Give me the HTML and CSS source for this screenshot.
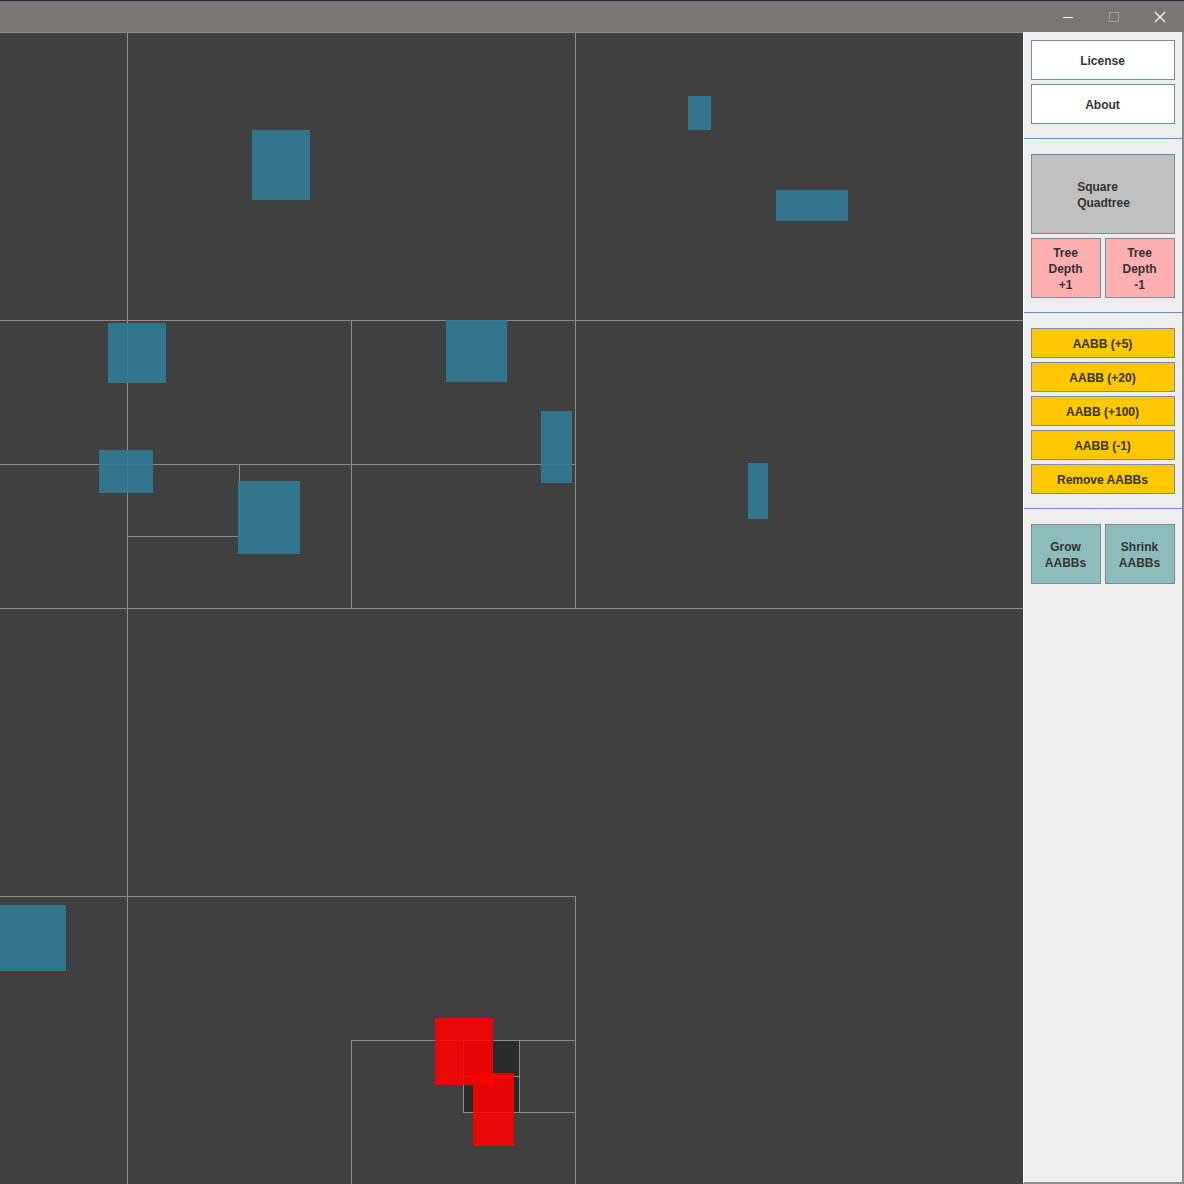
FILE: index.html
```html
<!DOCTYPE html>
<html>
<head>
<meta charset="utf-8">
<link rel="stylesheet" href="styles.css">
</head>
<body>
<div class="window">
  <div class="titlebar">
    <div class="tb-btn">
      <svg width="12" height="12" viewBox="0 0 12 12"><line x1="1" y1="6.5" x2="11" y2="6.5" stroke="#ffffff" stroke-width="1"/></svg>
    </div>
    <div class="tb-btn">
      <svg width="12" height="12" viewBox="0 0 12 12"><rect x="1.5" y="1.5" width="9" height="9" fill="none" stroke="#a39e9d" stroke-width="1"/></svg>
    </div>
    <div class="tb-btn">
      <svg width="12" height="12" viewBox="0 0 12 12"><path d="M1 1 L11 11 M11 1 L1 11" stroke="#ffffff" stroke-width="1.2"/></svg>
    </div>
  </div>
  <div class="main">
    <div class="canvas">
      <div class="cell-dark" style="left:463px;top:1008px;width:57px;height:73px"></div>

      <div class="ln" style="left:0;top:0;width:1023px;height:1px"></div>
      <div class="ln" style="left:127px;top:0;width:1px;height:1152px"></div>
      <div class="ln" style="left:575px;top:0;width:1px;height:577px"></div>
      <div class="ln" style="left:0;top:288px;width:1023px;height:1px"></div>
      <div class="ln" style="left:0;top:576px;width:1023px;height:1px"></div>
      <div class="ln" style="left:351px;top:288px;width:1px;height:288px"></div>
      <div class="ln" style="left:0;top:432px;width:576px;height:1px"></div>
      <div class="ln" style="left:239px;top:432px;width:1px;height:72px"></div>
      <div class="ln" style="left:127px;top:504px;width:113px;height:1px"></div>
      <div class="ln" style="left:0;top:864px;width:576px;height:1px"></div>
      <div class="ln" style="left:575px;top:864px;width:1px;height:288px"></div>
      <div class="ln" style="left:351px;top:1008px;width:225px;height:1px"></div>
      <div class="ln" style="left:351px;top:1008px;width:1px;height:144px"></div>
      <div class="ln" style="left:463px;top:1008px;width:1px;height:73px"></div>
      <div class="ln" style="left:519px;top:1008px;width:1px;height:73px"></div>
      <div class="ln" style="left:463px;top:1044px;width:57px;height:1px"></div>
      <div class="ln" style="left:463px;top:1080px;width:113px;height:1px"></div>

      <div class="box" style="left:252px;top:98px;width:58px;height:70px"></div>
      <div class="box" style="left:688px;top:64px;width:23px;height:34px"></div>
      <div class="box" style="left:776px;top:158px;width:72px;height:31px"></div>
      <div class="box" style="left:108px;top:291px;width:58px;height:60px"></div>
      <div class="box" style="left:446px;top:288px;width:61px;height:62px"></div>
      <div class="box" style="left:541px;top:379px;width:31px;height:72px"></div>
      <div class="box" style="left:99px;top:418px;width:54px;height:43px"></div>
      <div class="box" style="left:238px;top:449px;width:62px;height:73px"></div>
      <div class="box" style="left:748px;top:431px;width:20px;height:56px"></div>
      <div class="box" style="left:0;top:873px;width:66px;height:66px"></div>

      <div class="box hit" style="left:435px;top:986px;width:58px;height:67px"></div>
      <div class="box hit" style="left:473px;top:1041px;width:41px;height:73px"></div>
    </div>
    <div class="panel">
      <div class="section s-first">
        <button class="btn white">License</button>
        <button class="btn white">About</button>
      </div>
      <div class="sep"></div>
      <div class="section">
        <button class="btn gray tall"><span class="lines left">Square<br>Quadtree</span></button>
        <div class="pair">
          <button class="btn pink mid"><span class="lines">Tree<br>Depth<br>+1</span></button>
          <button class="btn pink mid"><span class="lines">Tree<br>Depth<br>-1</span></button>
        </div>
      </div>
      <div class="sep"></div>
      <div class="section">
        <button class="btn yellow">AABB (+5)</button>
        <button class="btn yellow">AABB (+20)</button>
        <button class="btn yellow">AABB (+100)</button>
        <button class="btn yellow">AABB (-1)</button>
        <button class="btn yellow">Remove AABBs</button>
      </div>
      <div class="sep"></div>
      <div class="section">
        <div class="pair">
          <button class="btn teal mid"><span class="lines">Grow<br>AABBs</span></button>
          <button class="btn teal mid"><span class="lines">Shrink<br>AABBs</span></button>
        </div>
      </div>
    </div>
  </div>
</div>
</body>
</html>
```

FILE: styles.css
```css
* { box-sizing: border-box; }
html, body {
  margin: 0;
  padding: 0;
  width: 1184px;
  height: 1184px;
  overflow: hidden;
  background: #404040;
  font-family: "Liberation Sans", Arial, sans-serif;
}
.window {
  width: 1184px;
  height: 1184px;
  display: flex;
  flex-direction: column;
}
.titlebar {
  height: 32px;
  flex: 0 0 32px;
  background: #7b7574;
  border-top: 1px solid #2b2b36;
  display: flex;
  justify-content: flex-end;
  align-items: center;
  padding-right: 1px;
}
.tb-btn {
  width: 46px;
  height: 31px;
  display: flex;
  align-items: center;
  justify-content: center;
}
.main {
  flex: 1;
  display: flex;
  min-height: 0;
}
.canvas {
  position: relative;
  width: 1023px;
  flex: 0 0 1023px;
  background: #404040;
  overflow: hidden;
}
.ln {
  position: absolute;
  background: #8c8c8c;
}
.cell-dark {
  position: absolute;
  background: #2b2b2b;
}
.box {
  position: absolute;
  background: rgba(50, 121, 147, 0.9);
}
.box.hit {
  background: rgba(255, 0, 0, 0.88);
}
.panel {
  flex: 1;
  background: #eeeeee;
  border-left: 1px solid #ffffff;
  border-right: 2px solid #8a8a8a;
  border-bottom: 2px solid #8a8a8a;
  display: flex;
  flex-direction: column;
}
.section {
  padding: 15px 7px 14px 7px;
  display: flex;
  flex-direction: column;
  gap: 4px;
}
.section.s-first {
  padding-top: 8px;
}
.sep {
  height: 1px;
  background: #6b8cce;
}
.pair {
  display: grid;
  grid-template-columns: 1fr 1fr;
  gap: 4px;
}
.btn {
  display: flex;
  align-items: center;
  justify-content: center;
  width: 100%;
  height: 30px;
  margin: 0;
  padding: 2px 1px 0 0;
  border: 1px solid #7a8a99;
  font-family: "Liberation Sans", Arial, sans-serif;
  font-weight: bold;
  font-size: 12px;
  color: #333333;
  line-height: 16px;
}
.btn.white { background: #ffffff; height: 40px; }
.btn.gray { background: #c0c0c0; }
.btn.tall { height: 80px; }
.btn.mid { height: 60px; }
.btn.pink { background: #ffafaf; }
.btn.yellow { background: #ffc800; }
.btn.teal { background: #8cbcbc; }
.lines {
  display: inline-block;
  text-align: center;
}
.lines.left {
  text-align: left;
  margin-left: 2px;
}
```
